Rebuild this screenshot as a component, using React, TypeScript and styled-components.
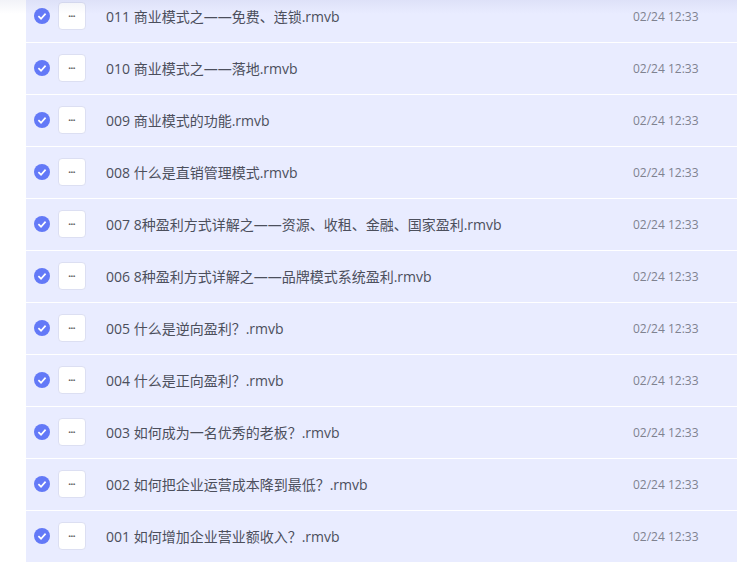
import React from "react";
import styled, { createGlobalStyle } from "styled-components";

const Global = createGlobalStyle`
  html, body { margin: 0; padding: 0; background: #fff; width: 737px; height: 570px; overflow: hidden; }
`;

const Page = styled.div`
  position: relative;
  width: 737px;
  height: 570px;
  overflow: hidden;
  background: #fff;
  padding-left: 26px;
  box-sizing: border-box;
  font-family: "Open Sans", "Noto Sans CJK SC", sans-serif;
`;

const TopShade = styled.div`
  position: absolute;
  left: 0;
  top: 0;
  right: 0;
  height: 14px;
  background: linear-gradient(to bottom, rgba(90, 100, 170, 0.08), rgba(90, 100, 170, 0));
`;

const List = styled.div`
  display: flex;
  flex-direction: column;
  margin-top: -9px;
`;

const Row = styled.div`
  display: flex;
  align-items: center;
  height: 50.5px;
  margin-bottom: 1.5px;
  background: #e9ecff;
  flex: none;
`;

const Check = styled.svg`
  width: 16px;
  height: 16px;
  margin-left: 8px;
  flex: none;
`;

const FileBox = styled.div`
  width: 26px;
  height: 26px;
  margin-left: 8px;
  border: 1px solid #dcdff2;
  border-radius: 4px;
  background: #fff;
  display: flex;
  align-items: center;
  justify-content: center;
  color: #666;
  font-size: 6px;
  font-weight: 700;
  line-height: 1;
  flex: none;
`;

const Name = styled.div`
  margin-left: 20px;
  flex: 1;
  font-size: 14px;
  color: #4c4f5c;
  white-space: nowrap;
`;

const Time = styled.div`
  width: 104px;
  flex: none;
  font-size: 12px;
  color: #7f8290;
  white-space: nowrap;
`;

const names = [
  "011 商业模式之——免费、连锁.rmvb",
  "010 商业模式之——落地.rmvb",
  "009 商业模式的功能.rmvb",
  "008 什么是直销管理模式.rmvb",
  "007 8种盈利方式详解之——资源、收租、金融、国家盈利.rmvb",
  "006 8种盈利方式详解之——品牌模式系统盈利.rmvb",
  "005 什么是逆向盈利？.rmvb",
  "004 什么是正向盈利？.rmvb",
  "003 如何成为一名优秀的老板？.rmvb",
  "002 如何把企业运营成本降到最低？.rmvb",
  "001 如何增加企业营业额收入？.rmvb",
];

export default function App() {
  return (
    <Page>
      <Global />
      <List>
        {names.map((n) => (
          <Row key={n}>
            <Check viewBox="0 0 16 16">
              <circle cx="8" cy="8" r="8" fill="#6379f7" />
              <path d="M4.4 8.2 L7 10.7 L11.6 5.6" fill="none" stroke="#fff" strokeWidth="1.7" />
            </Check>
            <FileBox>•••</FileBox>
            <Name>{n}</Name>
            <Time>02/24 12:33</Time>
          </Row>
        ))}
      </List>
      <TopShade />
    </Page>
  );
}
